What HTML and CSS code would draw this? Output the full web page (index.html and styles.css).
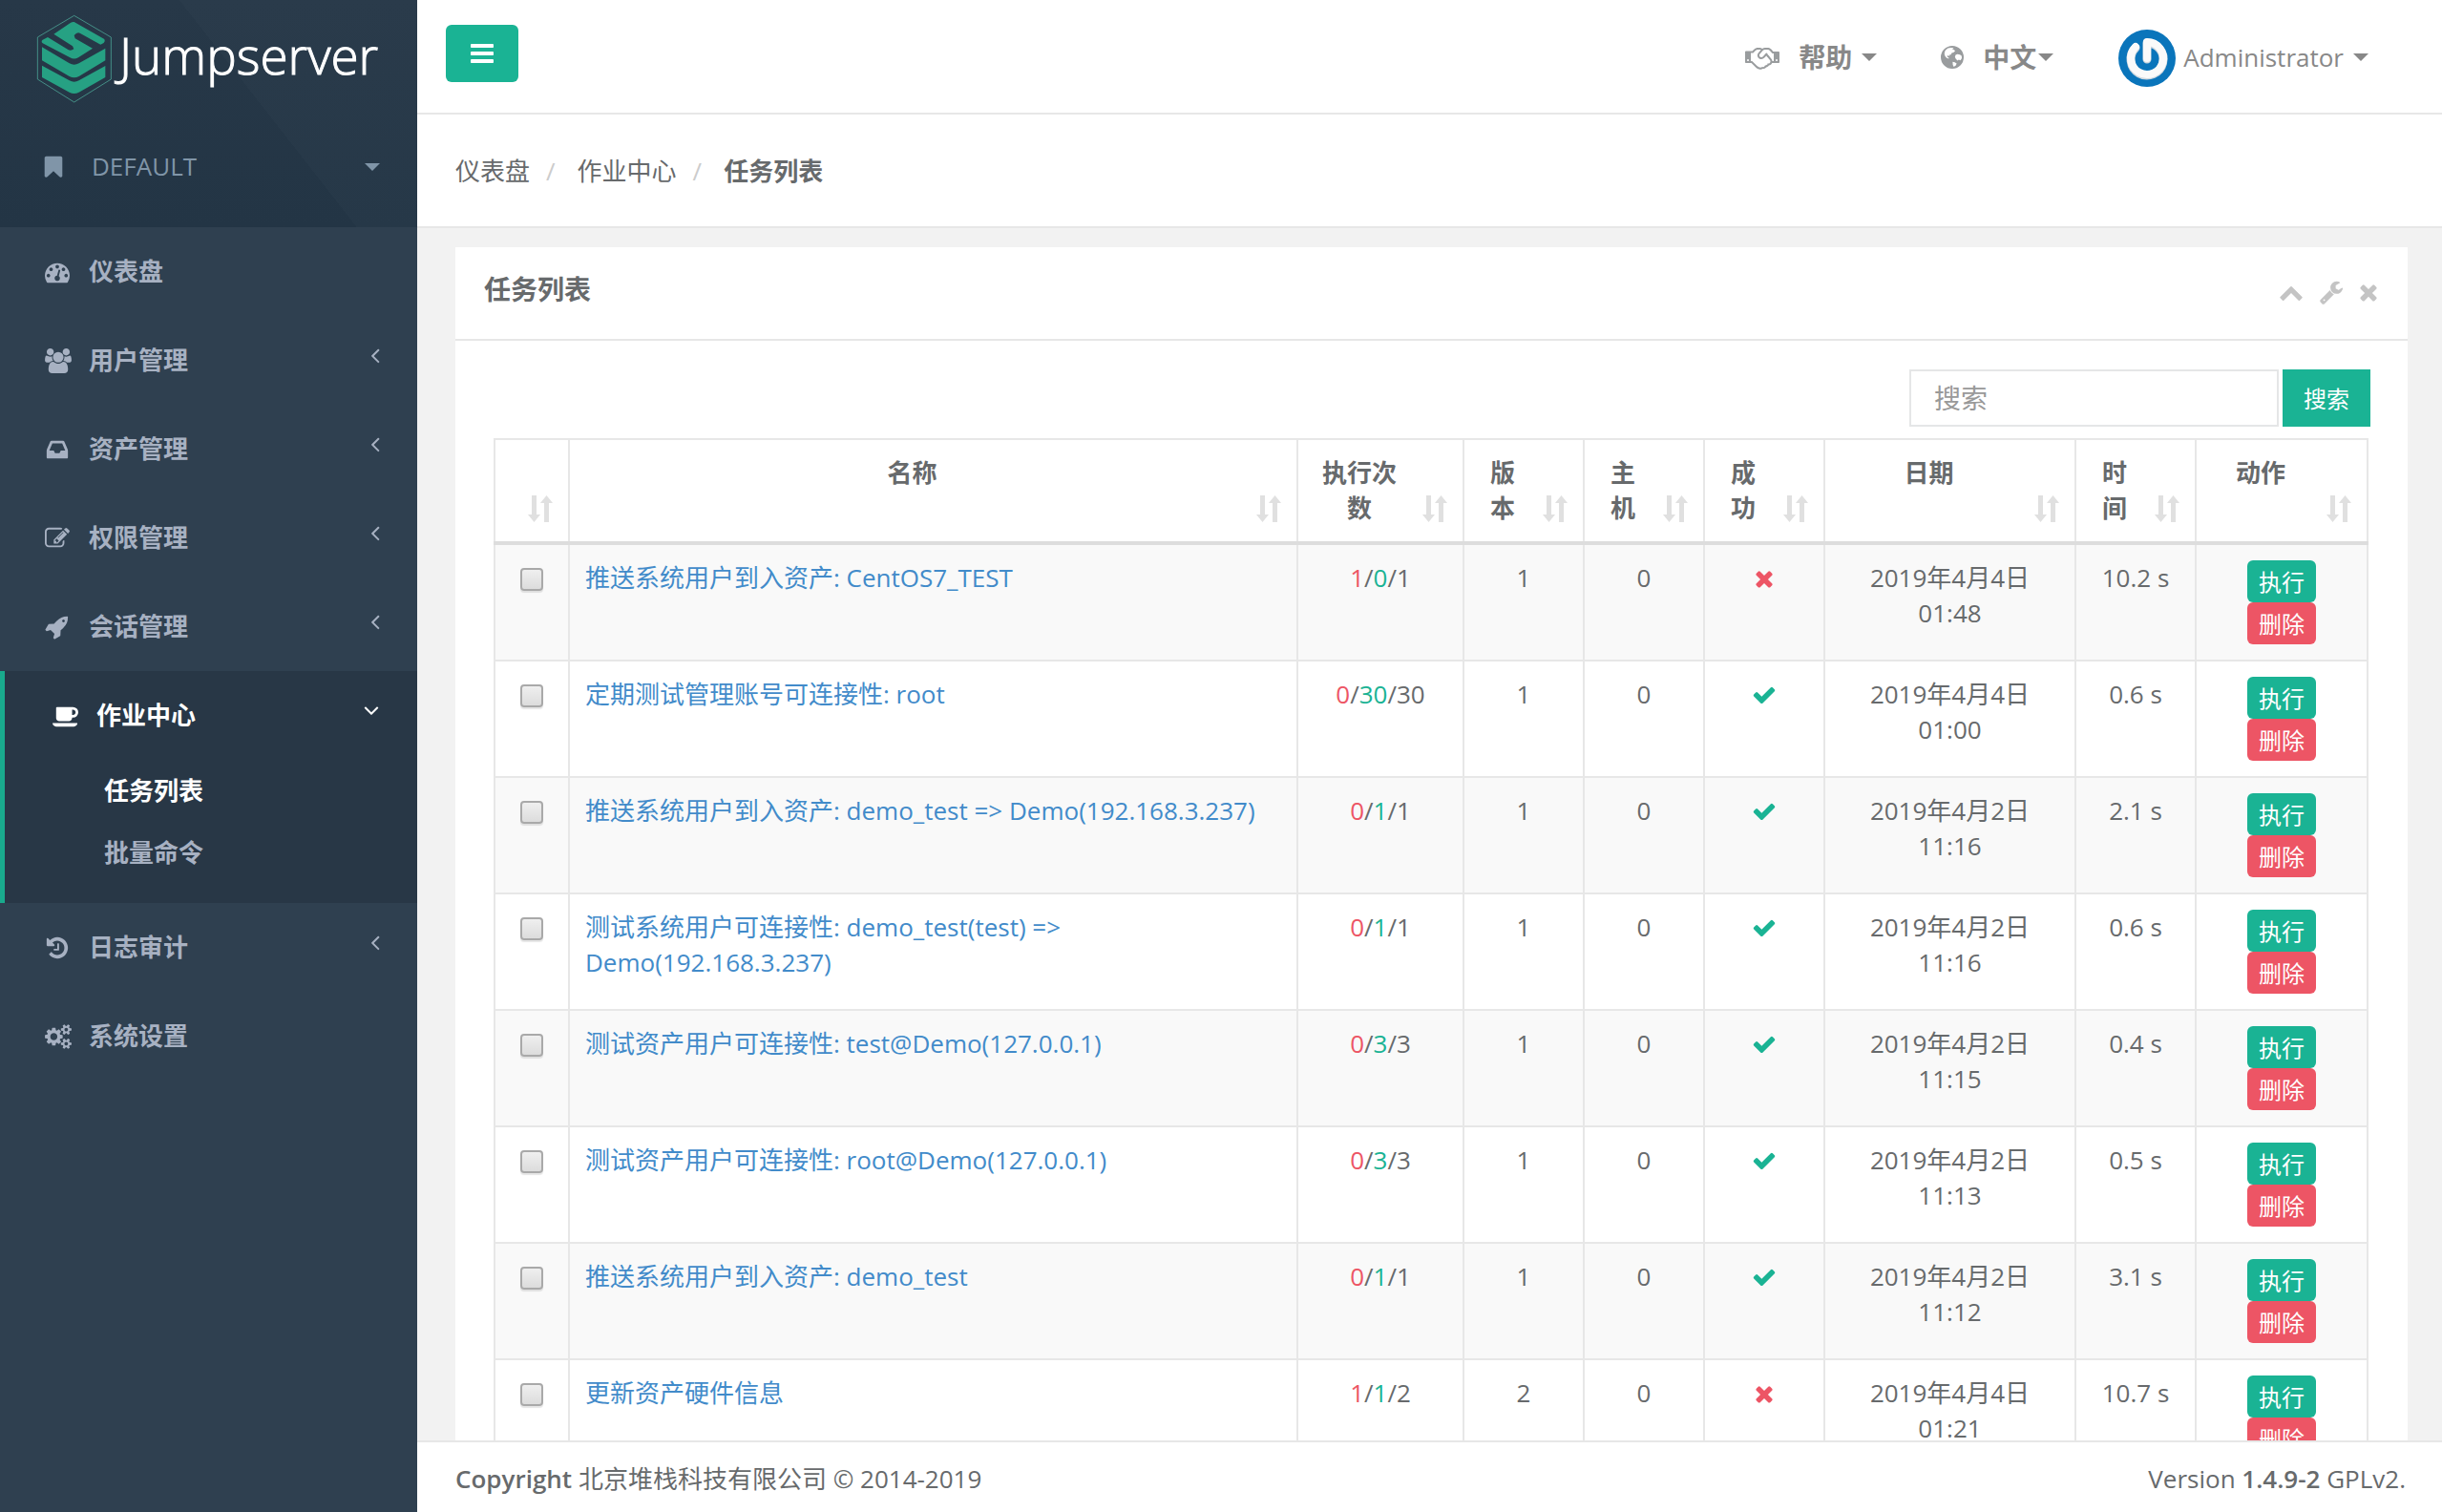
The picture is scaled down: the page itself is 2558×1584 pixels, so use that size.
FILE: index.html
```html
<!DOCTYPE html>
<html lang="zh-CN">
<head>
<meta charset="utf-8">
<title>任务列表 - Jumpserver</title>
<link rel="stylesheet" href="styles.css">
</head>
<body>
<svg class="sprite" aria-hidden="true">
  <symbol id="i-bars" viewBox="0 0 1792 1792"><path d="M1664 1344v128q0 26-19 45t-45 19h-1408q-26 0-45-19t-19-45v-128q0-26 19-45t45-19h1408q26 0 45 19t19 45zm0-512v128q0 26-19 45t-45 19h-1408q-26 0-45-19t-19-45v-128q0-26 19-45t45-19h1408q26 0 45 19t19 45zm0-512v128q0 26-19 45t-45 19h-1408q-26 0-45-19t-19-45v-128q0-26 19-45t45-19h1408q26 0 45 19t19 45z"/></symbol>
  <symbol id="i-bookmark" viewBox="0 0 1792 1792"><path d="M1420 128q23 0 44 9 33 13 52.500 41t19.500 62v1289q0 34-19.500 62t-52.500 41q-19 8-44 8-48 0-83-32l-441-424-441 424q-36 33-83 33-23 0-44-9-33-13-52.500-41t-19.500-62v-1289q0-34 19.500-62t52.500-41q21-9 44-9h1048z"/></symbol>
  <symbol id="i-dashboard" viewBox="0 0 1792 1792"><path d="M384 1152q0-53-37.500-90.500t-90.500-37.500-90.500 37.500-37.500 90.500 37.500 90.500 90.500 37.500 90.500-37.500 37.500-90.500zm192-448q0-53-37.500-90.500t-90.500-37.500-90.500 37.500-37.500 90.500 37.500 90.500 90.500 37.500 90.500-37.500 37.500-90.500zm428 481l101-382q6-26-7.500-48.500t-38.500-29.500-48 6.500-30 39.500l-101 382q-60 5-107 43.500t-63 98.500q-20 77 20 146t117 89 146-20 89-117q16-60-6-117t-72-91zm660-33q0-53-37.500-90.500t-90.500-37.500-90.500 37.500-37.500 90.500 37.500 90.500 90.500 37.500 90.500-37.500 37.500-90.500zm-640-640q0-53-37.500-90.500t-90.500-37.500-90.500 37.500-37.500 90.500 37.500 90.500 90.500 37.500 90.500-37.500 37.500-90.500zm448 192q0-53-37.500-90.500t-90.500-37.500-90.500 37.500-37.500 90.500 37.500 90.500 90.500 37.500 90.500-37.500 37.500-90.500zm320 448q0 261-141 483-19 29-54 29h-1402q-35 0-54-29-141-221-141-483 0-182 71-348t191-286 286-191 348-71 348 71 286 191 191 286 71 348z"/></symbol>
  <symbol id="i-users" viewBox="-64 0 1920 1792"><path d="M529 896q-162 5-265 128h-134q-82 0-138-40.500t-56-118.500q0-353 124-353 6 0 43.500 21t97.500 42.500 119 21.500q67 0 133-23-5 37-5 66 0 139 81 256zm1071 637q0 120-73 189.500t-194 69.500h-874q-121 0-194-69.500t-73-189.500q0-53 3.500-103.500t14-109 26.500-108.500 43-97.500 62-81 85.500-53.500 111.500-20q10 0 43 21.500t73 48 107 48 135 21.500 135-21.500 107-48 73-48 43-21.500q61 0 111.500 20t85.500 53.500 62 81 43 97.500 26.500 108.500 14 109 3.500 103.500zm-1024-1277q0 106-75 181t-181 75-181-75-75-181 75-181 181-75 181 75 75 181zm704 384q0 159-112.500 271.500t-271.500 112.500-271.500-112.500-112.500-271.500 112.500-271.500 271.500-112.500 271.500 112.500 112.500 271.500zm576 225q0 78-56 118.500t-138 40.500h-134q-103-123-265-128 81-117 81-256 0-29-5-66 66 23 133 23 59 0 119-21.500t97.500-42.500 43.500-21q124 0 124 353zm-128-609q0 106-75 181t-181 75-181-75-75-181 75-181 181-75 181 75 75 181z"/></symbol>
  <symbol id="i-inbox" viewBox="0 0 1792 1792"><path d="M1151 960h316q-1-3-2.500-8t-2.500-8l-212-496h-708l-212 496q-1 2-2.500 8t-2.500 8h316l95 192h320zm513 30v482q0 26-19 45t-45 19h-1408q-26 0-45-19t-19-45v-482q0-62 25-123l238-552q10-25 36.500-42t52.500-17h832q26 0 52.500 17t36.500 42l238 552q25 61 25 123z"/></symbol>
  <symbol id="i-edit" viewBox="0 0 1792 1792"><path d="M888 1184l116-116-152-152-116 116v56h96v96h56zm440-720q-16-16-33 1l-350 350q-17 17-1 33t33-1l350-350q17-17 1-33zm80 594v190q0 119-84.500 203.500t-203.500 84.500h-832q-119 0-203.500-84.500t-84.500-203.500v-832q0-119 84.500-203.500t203.500-84.500h832q63 0 117 25 15 7 18 23 3 17-9 29l-49 49q-14 14-32 8-23-6-45-6h-832q-66 0-113 47t-47 113v832q0 66 47 113t113 47h832q66 0 113-47t47-113v-126q0-13 9-22l64-64q15-15 35-7t20 29zm-96-738l288 288-672 672h-288v-288zm444 132l-92 92-288-288 92-92q28-28 68-28t68 28l152 152q28 28 28 68t-28 68z"/></symbol>
  <symbol id="i-rocket" viewBox="0 0 1792 1792"><path d="M1440 448q0-40-28-68t-68-28-68 28-28 68 28 68 68 28 68-28 28-68zm224-288q0 249-75.500 430.500t-253.500 360.500q-81 80-195 176l-20 379q-2 16-16 26l-384 224q-7 4-16 4-12 0-23-9l-64-64q-13-14-8-32l85-276-281-281-276 85q-3 1-9 1-14 0-23-9l-64-64q-17-19-5-39l224-384q10-14 26-16l379-20q96-114 176-195 188-187 358-258t431-71q14 0 24 9.500t10 22.500z"/></symbol>
  <symbol id="i-coffee" viewBox="-64 0 1920 1792"><path d="M1600 640q0-80-56-136t-136-56h-64v384h64q80 0 136-56t56-136zm-1664 768h1792q0 106-75 181t-181 75h-1280q-106 0-181-75t-75-181zm1856-768q0 159-112.500 271.500t-271.500 112.500h-64v32q0 92-66 158t-158 66h-704q-92 0-158-66t-66-158v-736q0-26 19-45t45-19h1152q159 0 271.500 112.500t112.500 271.500z"/></symbol>
  <symbol id="i-history" viewBox="0 0 1792 1792"><path d="M1664 896q0 156-61 298t-164 245-245 164-298 61q-172 0-327-72.500t-264-204.500q-7-10-6.500-22.500t8.500-20.500l137-138q10-9 25-9 16 2 23 12 73 95 179 147t225 52q104 0 198.500-40.500t163.500-109.500 109.500-163.500 40.500-198.500-40.500-198.500-109.500-163.500-163.500-109.500-198.500-40.500q-98 0-188 35.500t-160 101.500l137 138q31 30 14 69-17 40-59 40h-448q-26 0-45-19t-19-45v-448q0-42 40-59 39-17 69 14l130 129q107-101 244.500-156.500t284.500-55.500q156 0 298 61t245 164 164 245 61 298zm-640-288v448q0 14-9 23t-23 9h-320q-14 0-23-9t-9-23v-64q0-14 9-23t23-9h224v-352q0-14 9-23t23-9h64q14 0 23 9t9 23z"/></symbol>
  <symbol id="i-cogs" viewBox="-64 0 1920 1792"><path d="M832 896q0-106-75-181t-181-75-181 75-75 181 75 181 181 75 181-75 75-181zm768 512q0-52-38-90t-90-38-90 38-38 90q0 53 37.500 90.500t90.500 37.500 90.500-37.500 37.500-90.500zm0-1024q0-52-38-90t-90-38-90 38-38 90q0 53 37.500 90.500t90.500 37.500 90.500-37.500 37.500-90.500zm-384 421v185q0 10-7 19.500t-16 10.500l-155 24q-11 35-32 76 34 48 90 115 7 11 7 20 0 12-7 19-23 30-82.500 89.500t-78.500 59.500q-11 0-21-7l-115-90q-37 19-77 31-11 108-23 155-7 24-30 24h-186q-11 0-20-7.500t-10-17.500l-23-153q-34-10-75-31l-118 89q-7 7-20 7-11 0-21-8-144-133-144-160 0-9 7-19 10-14 41-53t47-61q-23-44-35-82l-152-24q-10-1-17-9.500t-7-19.500v-185q0-10 7-19.500t16-10.500l155-24q11-35 32-76-34-48-90-115-7-11-7-20 0-12 7-20 22-30 82-89t79-59q11 0 21 7l115 90q34-18 77-32 11-108 23-154 7-24 30-24h186q11 0 20 7.500t10 17.500l23 153q34 10 75 31l118-89q8-7 20-7 11 0 21 8 144 133 144 160 0 8-7 19-12 16-42 54t-45 60q23 48 34 82l152 23q10 2 17 10.500t7 19.500zm640 533v140q0 16-149 31-12 27-30 52 51 113 51 138 0 4-4 7-122 71-124 71-8 0-46-47t-52-68q-20 2-30 2t-30-2q-14 21-52 68t-46 47q-2 0-124-71-4-3-4-7 0-25 51-138-18-25-30-52-149-15-149-31v-140q0-16 149-31 13-29 30-52-51-113-51-138 0-4 4-7 4-2 35-20t59-34 30-16q8 0 46 46.500t52 67.500q20-2 30-2t30 2q51-71 92-112l6-2q4 0 124 70 4 3 4 7 0 25-51 138 17 23 30 52 149 15 149 31zm0-1024v140q0 16-149 31-12 27-30 52 51 113 51 138 0 4-4 7-122 71-124 71-8 0-46-47t-52-68q-20 2-30 2t-30-2q-14 21-52 68t-46 47q-2 0-124-71-4-3-4-7 0-25 51-138-18-25-30-52-149-15-149-31v-140q0-16 149-31 13-29 30-52-51-113-51-138 0-4 4-7 4-2 35-20t59-34 30-16q8 0 46 46.500t52 67.500q20-2 30-2t30 2q51-71 92-112l6-2q4 0 124 70 4 3 4 7 0 25-51 138 17 23 30 52 149 15 149 31z"/></symbol>
  <symbol id="i-left" viewBox="0 0 1792 1792"><path d="M1203 544q0 13-10 23l-393 393 393 393q10 10 10 23t-10 23l-50 50q-10 10-23 10t-23-10l-466-466q-10-10-10-23t10-23l466-466q10-10 23-10t23 10l50 50q10 10 10 23z"/></symbol>
  <symbol id="i-down" viewBox="0 0 1792 1792"><path d="M1395 736q0 13-10 23l-466 466q-10 10-23 10t-23-10l-466-466q-10-10-10-23t10-23l50-50q10-10 23-10t23 10l393 393 393-393q10-10 23-10t23 10l50 50q10 10 10 23z"/></symbol>
  <symbol id="i-handshake" viewBox="0 0 2304 1792"><path d="M192 1152q40 0 56-32t0-64-56-32-56 32 0 64 56 32zm1473-58q-10-13-38.500-50t-41.500-54-38-49-42.500-53-40.500-47-45-49l-125 140q-83 94-208.500 92t-205.500-98q-57-69-56.500-158t58.500-157l177-206q-22-11-51-16.500t-47.500-6-56.500.5-49 1q-92 0-158 66l-158 158h-155v544q5 0 21-.5t22 0 19.500 2 20.500 4.500 17.500 8.500 18.500 13.500l297 292q115 111 227 111 78 0 125-47 57 20 112.500-8t72.500-85q74 6 127-44 20-18 36-45.500t14-50.500q10 10 43 10 43 0 77-21t49.500-53 12-71.500-30.500-73.500zm159 58h96v-512h-93l-157-180q-66-76-169-76h-167q-89 0-146 67l-209 243q-28 33-28 75t27 75q43 51 110 52t111-49l193-218q25-23 53.500-21.500t47 27 8.500 56.500q16 19 56 63t60 68q29 36 82.500 105.500t64.500 84.500q52 66 60 140zm288 0q40 0 56-32t0-64-56-32-56 32 0 64 56 32zm192-576v640q0 26-19 45t-45 19h-434q-27 65-82 106.500t-125 51.500q-33 48-80.500 81.500t-102.500 45.500q-42 53-104.500 81.500t-128.500 24.500q-60 34-126 39.500t-127.500-14-117-53.500-103.500-81l-287-282h-358q-26 0-45-19t-19-45v-672q0-26 19-45t45-19h421q14-14 47-48t47.500-48 44-40 50.500-37.500 51-25.500 62-19.500 68-5.500h117q99 0 181 56 82-56 181-56h167q35 0 67 6t56.500 14.500 51.500 26.500 44.500 31 43 39.500 39 42 41 48 41.500 48.500h355q26 0 45 19t19 45z"/></symbol>
  <symbol id="i-globe" viewBox="0 0 24 24"><path fill-rule="evenodd" d="M12 0a12 12 0 1 1 0 24a12 12 0 0 1 0-24zM5 4.600L7.500 2.600L10.500 2L13.500 2.200L12 3.800L13.800 4L15 5.400L13.200 7L11.400 7.600L10.600 9.200L9 9.600L9.200 10.800L7.600 10.200L6.600 10.600L7.200 12L8.600 12.400L8.200 13.600L6.200 12.800L4.600 11L3.800 8.800L4 6.400zM15.500 9.600L17.400 8.800L20 9.200L21.800 10.600L22 13L20.600 15.200L18.800 14.600L17.600 15.600L15.800 13.800L14.800 11.800zM12.400 16.800L14.600 17.200L16.600 18.600L15.800 20.600L13.600 22L12.600 20z"/></symbol>
  <symbol id="i-up" viewBox="0 0 1792 1792"><path d="M1683 1331l-166 165q-19 19-45 19t-45-19l-531-531-531 531q-19 19-45 19t-45-19l-166-165q-19-19-19-45.500t19-45.500l742-741q19-19 45-19t45 19l742 741q19 19 19 45.500t-19 45.500z"/></symbol>
  <symbol id="i-wrench" viewBox="0 0 1792 1792"><path d="M448 1472q0-26-19-45t-45-19-45 19-19 45 19 45 45 19 45-19 19-45zm644-420l-682 682q-37 37-90 37-52 0-91-37l-106-108q-38-36-38-90 0-53 38-91l681-681q39 98 114.500 173.500t173.500 114.500zm634-435q0 39-23 106-47 134-164.500 217.500t-258.500 83.500q-185 0-316.500-131.500t-131.500-316.500 131.500-316.500 316.500-131.500q58 0 121.500 16.500t107.500 46.500q16 11 16 28t-16 28l-293 169v224l193 107q5-3 79-48.500t135.500-81 70.500-35.500q15 0 23.500 10t8.500 25z"/></symbol>
  <symbol id="i-times" viewBox="206 0 1380 1792"><path d="M1490 1322q0 40-28 68l-136 136q-28 28-68 28t-68-28l-294-294-294 294q-28 28-68 28t-68-28l-136-136q-28-28-28-68t28-68l294-294-294-294q-28-28-28-68t28-68l136-136q28-28 68-28t68 28l294 294 294-294q28-28 68-28t68 28l136 136q28 28 28 68t-28 68l-294 294 294 294q28 28 28 68z"/></symbol>
  <symbol id="i-check" viewBox="0 0 1792 1792"><path d="M1671 566q0 40-28 68l-724 724-136 136q-28 28-68 28t-68-28l-136-136-362-362q-28-28-28-68t28-68l136-136q28-28 68-28t68 28l294 295 656-657q28-28 68-28t68 28l136 136q28 28 28 68z"/></symbol>
  <symbol id="i-sort" viewBox="0 0 26 28"><path d="M4 0h5v20h4L6.500 28L0 20h4zM17 28h5V8h4L19.500 0L13 8h4z"/></symbol>
</svg>

<aside class="sidebar">
  <header class="side-head">
    <a class="brand" href="#">
      <svg class="brand-mark" viewBox="24 21 240 279" aria-hidden="true">
        <path d="M143 25L259 93V225L143 297L28 225V93Z" fill="none" stroke="#4aa093" stroke-width="2.500"/>
        <path fill="#26a183" d="M143 45L238 99Q242 106 236 111L226 116L161 80Q152 76 143 87L146 97L201 128L156 157Q143 164 130 157L44 112Q38 106 44 101L60 93L124 132Q133 137 142 130L138 121L79 83L130 49Q137 44 143 45Z"/>
        <path fill="#26a183" d="M42 124L128 175Q143 183 158 175L241 128V166L158 216Q143 224 128 216L42 166Z"/>
        <path fill="#26a183" d="M42 182L128 229Q143 237 158 229L241 183V219L158 266Q143 274 128 266L42 219Z"/>
      </svg>
      <span class="brand-name">Jumpserver</span>
    </a>
    <button class="org" type="button">
      <svg class="ico"><use href="#i-bookmark"/></svg>
      <span>DEFAULT</span>
      <i class="caret"></i>
    </button>
  </header>
  <nav>
    <ul class="menu">
      <li><a href="#"><svg class="ico"><use href="#i-dashboard"/></svg><span>仪表盘</span></a></li>
      <li><a href="#"><svg class="ico wide"><use href="#i-users"/></svg><span>用户管理</span><svg class="arrow"><use href="#i-left"/></svg></a></li>
      <li><a href="#"><svg class="ico"><use href="#i-inbox"/></svg><span>资产管理</span><svg class="arrow"><use href="#i-left"/></svg></a></li>
      <li><a href="#"><svg class="ico"><use href="#i-edit"/></svg><span>权限管理</span><svg class="arrow"><use href="#i-left"/></svg></a></li>
      <li><a href="#"><svg class="ico"><use href="#i-rocket"/></svg><span>会话管理</span><svg class="arrow"><use href="#i-left"/></svg></a></li>
      <li class="active"><a href="#"><svg class="ico wide"><use href="#i-coffee"/></svg><span>作业中心</span><svg class="arrow"><use href="#i-down"/></svg></a>
        <ul class="submenu">
          <li><a class="current" href="#">任务列表</a></li>
          <li><a href="#">批量命令</a></li>
        </ul>
      </li>
      <li><a href="#"><svg class="ico"><use href="#i-history"/></svg><span>日志审计</span><svg class="arrow"><use href="#i-left"/></svg></a></li>
      <li><a href="#"><svg class="ico wide"><use href="#i-cogs"/></svg><span>系统设置</span></a></li>
    </ul>
  </nav>
</aside>

<div class="page">
  <header class="topbar">
    <button class="toggle" type="button" aria-label="菜单"><svg><use href="#i-bars"/></svg></button>
    <nav class="topnav">
      <a class="help" href="#"><svg class="shake"><use href="#i-handshake"/></svg><strong>帮助</strong><i class="caret"></i></a>
      <a class="lang" href="#"><svg class="globe"><use href="#i-globe"/></svg><strong>中文</strong><i class="caret"></i></a>
      <a class="user" href="#">
        <svg class="avatar" viewBox="0 0 60 60" aria-hidden="true"><circle cx="30" cy="30" r="30" fill="#0a75bb"/><path d="M30 31V14A17 17 0 1 1 18 19" fill="none" stroke="#cfd8df" stroke-width="9" stroke-linecap="round" stroke-linejoin="round"/><path d="M30 30V13A17 17 0 1 1 18 18" fill="none" stroke="#fafafa" stroke-width="8" stroke-linecap="round" stroke-linejoin="round"/></svg>
        <span>Administrator</span><i class="caret"></i></a>
    </nav>
  </header>

  <ol class="crumbs">
    <li><a href="#">仪表盘</a></li>
    <li><a href="#">作业中心</a></li>
    <li><strong>任务列表</strong></li>
  </ol>

  <main class="content">
    <section class="panel">
      <header class="panel-head">
        <h1>任务列表</h1>
        <div class="tools">
          <a href="#" aria-label="折叠"><svg><use href="#i-up"/></svg></a>
          <a href="#" aria-label="设置"><svg><use href="#i-wrench"/></svg></a>
          <a href="#" aria-label="关闭"><svg class="narrow"><use href="#i-times"/></svg></a>
        </div>
      </header>
      <div class="panel-body">
        <form class="search">
          <input type="text" placeholder="搜索" aria-label="搜索">
          <button type="button">搜索</button>
        </form>
        <table class="tasks">
          <colgroup><col class="c-pick"><col><col class="c-runs"><col class="c-small"><col class="c-small"><col class="c-small"><col class="c-date"><col class="c-small"><col class="c-act"></colgroup>
          <thead>
            <tr>
              <th><svg class="sort"><use href="#i-sort"/></svg></th>
              <th>名称<svg class="sort"><use href="#i-sort"/></svg></th>
              <th>执行次数<svg class="sort"><use href="#i-sort"/></svg></th>
              <th>版本<svg class="sort"><use href="#i-sort"/></svg></th>
              <th>主机<svg class="sort"><use href="#i-sort"/></svg></th>
              <th>成功<svg class="sort"><use href="#i-sort"/></svg></th>
              <th>日期<svg class="sort"><use href="#i-sort"/></svg></th>
              <th>时间<svg class="sort"><use href="#i-sort"/></svg></th>
              <th>动作<svg class="sort"><use href="#i-sort"/></svg></th>
            </tr>
          </thead>
          <tbody>
            <tr><td><input type="checkbox" aria-label="选择"></td><td class="name"><a href="#">推送系统用户到入资产: CentOS7_TEST</a></td><td><span class="bad">1</span>/<span class="ok">0</span>/1</td><td>1</td><td>0</td><td><svg class="bad"><use href="#i-times"/></svg></td><td>2019年4月4日 01:48</td><td>10.2 s</td><td class="act"><button class="run" type="button">执行</button><button class="del" type="button">删除</button></td></tr>
            <tr><td><input type="checkbox" aria-label="选择"></td><td class="name"><a href="#">定期测试管理账号可连接性: root</a></td><td><span class="bad">0</span>/<span class="ok">30</span>/30</td><td>1</td><td>0</td><td><svg class="ok"><use href="#i-check"/></svg></td><td>2019年4月4日 01:00</td><td>0.6 s</td><td class="act"><button class="run" type="button">执行</button><button class="del" type="button">删除</button></td></tr>
            <tr><td><input type="checkbox" aria-label="选择"></td><td class="name"><a href="#">推送系统用户到入资产: demo_test =&gt; Demo(192.168.3.237)</a></td><td><span class="bad">0</span>/<span class="ok">1</span>/1</td><td>1</td><td>0</td><td><svg class="ok"><use href="#i-check"/></svg></td><td>2019年4月2日 11:16</td><td>2.1 s</td><td class="act"><button class="run" type="button">执行</button><button class="del" type="button">删除</button></td></tr>
            <tr><td><input type="checkbox" aria-label="选择"></td><td class="name"><a href="#">测试系统用户可连接性: demo_test(test) =&gt; Demo(192.168.3.237)</a></td><td><span class="bad">0</span>/<span class="ok">1</span>/1</td><td>1</td><td>0</td><td><svg class="ok"><use href="#i-check"/></svg></td><td>2019年4月2日 11:16</td><td>0.6 s</td><td class="act"><button class="run" type="button">执行</button><button class="del" type="button">删除</button></td></tr>
            <tr><td><input type="checkbox" aria-label="选择"></td><td class="name"><a href="#">测试资产用户可连接性: test@Demo(127.0.0.1)</a></td><td><span class="bad">0</span>/<span class="ok">3</span>/3</td><td>1</td><td>0</td><td><svg class="ok"><use href="#i-check"/></svg></td><td>2019年4月2日 11:15</td><td>0.4 s</td><td class="act"><button class="run" type="button">执行</button><button class="del" type="button">删除</button></td></tr>
            <tr><td><input type="checkbox" aria-label="选择"></td><td class="name"><a href="#">测试资产用户可连接性: root@Demo(127.0.0.1)</a></td><td><span class="bad">0</span>/<span class="ok">3</span>/3</td><td>1</td><td>0</td><td><svg class="ok"><use href="#i-check"/></svg></td><td>2019年4月2日 11:13</td><td>0.5 s</td><td class="act"><button class="run" type="button">执行</button><button class="del" type="button">删除</button></td></tr>
            <tr><td><input type="checkbox" aria-label="选择"></td><td class="name"><a href="#">推送系统用户到入资产: demo_test</a></td><td><span class="bad">0</span>/<span class="ok">1</span>/1</td><td>1</td><td>0</td><td><svg class="ok"><use href="#i-check"/></svg></td><td>2019年4月2日 11:12</td><td>3.1 s</td><td class="act"><button class="run" type="button">执行</button><button class="del" type="button">删除</button></td></tr>
            <tr><td><input type="checkbox" aria-label="选择"></td><td class="name"><a href="#">更新资产硬件信息</a></td><td><span class="bad">1</span>/<span class="ok">1</span>/2</td><td>2</td><td>0</td><td><svg class="bad"><use href="#i-times"/></svg></td><td>2019年4月4日 01:21</td><td>10.7 s</td><td class="act"><button class="run" type="button">执行</button><button class="del" type="button">删除</button></td></tr>
          </tbody>
        </table>
      </div>
    </section>
  </main>

  <footer class="footer">
    <div><strong>Copyright</strong> 北京堆栈科技有限公司 © 2014-2019</div>
    <div>Version <strong>1.4.9-2</strong> GPLv2.</div>
  </footer>
</div>
</body>
</html>
```
FILE: styles.css
```css
*,
*::before,
*::after {
  box-sizing: border-box;
}

body {
  margin: 0;
  height: 100vh;
  display: flex;
  overflow: hidden;
  background: #f2f2f2;
  color: #676a6c;
  font: 26px/37px "Open Sans", "Noto Sans CJK SC", sans-serif;
}

a {
  color: inherit;
  text-decoration: none;
}

ul,
ol {
  margin: 0;
  padding: 0;
  list-style: none;
}

button,
input {
  font: inherit;
}

button {
  border: 0;
  padding: 0;
  cursor: pointer;
}

svg {
  fill: currentColor;
  flex: none;
}

.sprite {
  display: none;
}

.caret {
  width: 0;
  height: 0;
  border: 8px solid transparent;
  border-top-color: currentColor;
  border-bottom: 0;
}

/* Sidebar */

.sidebar {
  flex: none;
  width: 437px;
  background: #2f4050;
  color: #a7b1c2;
}

.side-head {
  height: 238px;
  padding: 15px 39px 0 38px;
  background:
    linear-gradient(52deg, transparent 60%, rgba(255, 255, 255, 0.015) 60%),
    linear-gradient(180deg, #273848, #233545);
}

.brand {
  display: flex;
  align-items: center;
  gap: 7px;
  height: 93px;
  color: #fff;
}

.brand-mark {
  width: 80px;
  height: 93px;
}

.brand-name {
  margin-bottom: 8px;
  font-size: 53px;
  font-weight: 300;
  line-height: 60px;
  -webkit-text-stroke: 1px currentColor;
}

.org {
  display: flex;
  align-items: center;
  width: 100%;
  margin-top: 48px;
  padding: 0 0 0 5px;
  background: none;
  color: #8095a8;
  text-align: left;
}

.org span {
  flex: 1;
  margin-left: 27px;
}

.ico {
  width: 26px;
  height: 26px;
}

.ico.wide {
  width: 28px;
}

.menu > li > a {
  display: flex;
  align-items: center;
  height: 93px;
  padding: 0 31px 0 47px;
  font-weight: 700;
}

.menu > li > a span {
  flex: 1;
  margin-left: 20px;
}

.menu .wide + span {
  margin-left: 18px;
}

.arrow {
  width: 26px;
  height: 26px;
  margin-bottom: 12px;
}

.menu > li.active {
  padding-bottom: 20px;
  border-left: 5px solid #19aa8d;
  background: #283746;
}

.menu > li.active > a {
  padding: 0 35px 0 50px;
  color: #fff;
}

.submenu a {
  display: block;
  padding: 14px 20px 14px 104px;
  font-weight: 700;
}

.submenu .current {
  color: #fff;
}

/* Page column */

.page {
  flex: 1;
  min-width: 0;
  display: flex;
  flex-direction: column;
}

.topbar {
  flex: none;
  display: flex;
  justify-content: space-between;
  height: 120px;
  padding: 0 77px 0 30px;
  border-bottom: 2px solid #e7e7e7;
  background: #fff;
}

.toggle {
  display: flex;
  align-items: center;
  justify-content: center;
  width: 76px;
  height: 60px;
  margin-top: 26px;
  border-radius: 6px;
  background: #1ab394;
  color: #fff;
}

.toggle svg {
  width: 28px;
  height: 28px;
}

.topnav {
  display: flex;
  align-items: center;
  height: 120px;
  color: #888;
}

.topnav a {
  display: flex;
  align-items: center;
}

.topnav strong {
  font-size: 28px;
}

.shake {
  width: 36px;
  height: 28px;
  margin-right: 20px;
  color: #999c9e;
}

.globe {
  width: 24px;
  height: 24px;
  margin-right: 20px;
  color: #999c9e;
}

.help .caret {
  margin-left: 10px;
}

.lang {
  margin: 0 68px 0 67px;
}

.lang .caret {
  margin-left: 2px;
}

.user .caret {
  margin-left: 10px;
}

.avatar {
  width: 60px;
  height: 60px;
  margin: 2px 8px 0 0;
}

.crumbs {
  flex: none;
  display: flex;
  align-items: center;
  height: 119px;
  padding: 2px 40px 0;
  border-bottom: 2px solid #e7e7e7;
  background: #fff;
}

.crumbs li + li::before {
  content: "/";
  margin: 0 23px 0 17px;
  color: #ccc;
}

.content {
  flex: 1;
  min-height: 0;
  overflow: hidden;
  padding: 20px 36px 0 40px;
}

.panel {
  background: #fff;
}

.panel-head {
  display: flex;
  align-items: center;
  justify-content: space-between;
  height: 98px;
  padding: 0 31px 8px 30px;
  border-bottom: 2px solid #e7e7e7;
}

.panel-head h1 {
  margin: 0;
  font-size: 28px;
}

.tools {
  display: flex;
  gap: 16px;
  padding-top: 6px;
  color: #c4c4c4;
}

.tools a {
  display: flex;
}

.tools svg {
  width: 26px;
  height: 26px;
}

.tools .narrow {
  width: 20px;
}

.panel-body {
  padding: 30px 41px 30px 40px;
}

.search {
  display: flex;
  justify-content: flex-end;
  gap: 4px;
  margin: 0 -2px 12px 0;
}

.search input {
  width: 387px;
  height: 60px;
  padding: 0 24px;
  border: 2px solid #e5e6e7;
  background: #fff;
  color: inherit;
  font-size: 28px;
}

.search input::placeholder {
  color: #999;
}

.search button {
  width: 92px;
  height: 60px;
  background: #1ab394;
  color: #fff;
  font-size: 24px;
}

/* Task table */

.tasks {
  width: 100%;
  table-layout: fixed;
  border-collapse: collapse;
  text-align: center;
}

.c-pick {
  width: 78px;
}

.c-runs {
  width: 174px;
}

.c-small {
  width: 126px;
}

.c-date {
  width: 263px;
}

.c-act {
  width: 180px;
}

.tasks th,
.tasks td {
  padding: 16px;
  border: 2px solid #e7e7e7;
  vertical-align: top;
}

.tasks th {
  position: relative;
  padding-right: 60px;
  border-bottom: 4px solid #ddd;
}

.tasks th:first-child {
  padding: 16px 0;
}

.sort {
  position: absolute;
  right: 16px;
  bottom: 20px;
  width: 26px;
  height: 28px;
  color: #e0e0e0;
}

.tasks tbody tr:nth-child(odd) {
  background: #f9f9f9;
}

.tasks .name {
  text-align: left;
}

.name a {
  color: #428bca;
}

.tasks td > svg {
  display: block;
  width: 26px;
  height: 26px;
  margin: 6px auto;
}

.bad {
  color: #ed5565;
}

.ok {
  color: #1ab394;
}

.tasks input {
  appearance: none;
  display: block;
  width: 24px;
  height: 24px;
  margin: 8px auto;
  border: 2px solid #a9a9a9;
  border-radius: 4px;
  background: linear-gradient(#efefef, #dcdcdc);
  box-shadow: 0 2px 1px rgba(0, 0, 0, 0.1);
}

.act button {
  display: block;
  width: 72px;
  height: 44px;
  margin: 0 auto;
  border-radius: 6px;
  color: #fff;
  font-size: 24px;
}

.run {
  background: #1ab394;
}

.del {
  background: #ed5565;
}

/* Footer */

.footer {
  flex: none;
  display: flex;
  align-items: center;
  justify-content: space-between;
  height: 75px;
  padding: 4px 38px 0 40px;
  border-top: 2px solid #e7e7e7;
  background: #fff;
}

.footer strong {
  font-weight: 600;
}
```
